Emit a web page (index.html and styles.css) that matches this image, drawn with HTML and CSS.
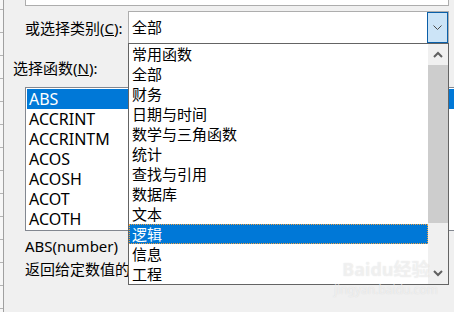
FILE: index.html
```html
<!DOCTYPE html>
<html lang="zh-CN">
<head>
    <meta charset="UTF-8">
    <meta name="viewport" content="width=device-width, initial-scale=1.0">
    <title>插入函数</title>
    <link rel="stylesheet" href="styles.css">
</head>
<body>
    <div class="window">
        <div class="ruler"></div>
        <div class="dialog">
            <div class="top-box"></div>
            <div class="category-row">
                <label class="category-label">或选择类别(<u>C</u>):</label>
                <div class="combo">
                    <span class="combo-value">全部</span>
                    <span class="combo-btn">
                        <svg width="9" height="5" viewBox="0 0 9 5"><polyline points="0.5,0.5 4.5,4.5 8.5,0.5" fill="none" stroke="#4a4a4a" stroke-width="1"/></svg>
                    </span>
                </div>
            </div>
            <div class="func-label">选择函数(<u>N</u>):</div>
            <div class="func-list">
                <div class="func-item selected">ABS</div>
                <div class="func-item">ACCRINT</div>
                <div class="func-item">ACCRINTM</div>
                <div class="func-item">ACOS</div>
                <div class="func-item">ACOSH</div>
                <div class="func-item">ACOT</div>
                <div class="func-item">ACOTH</div>
            </div>
            <div class="syntax">ABS(number)</div>
            <div class="desc">返回给定数值的</div>
        </div>

        <!-- 展开的类别下拉列表 -->
        <div class="dropdown">
            <div class="options">
                <div class="option">常用函数</div>
                <div class="option">全部</div>
                <div class="option">财务</div>
                <div class="option">日期与时间</div>
                <div class="option">数学与三角函数</div>
                <div class="option">统计</div>
                <div class="option">查找与引用</div>
                <div class="option">数据库</div>
                <div class="option">文本</div>
                <div class="option active">逻辑</div>
                <div class="option">信息</div>
                <div class="option">工程</div>
            </div>
            <div class="scrollbar">
                <div class="scroll-btn">
                    <svg width="10" height="7" viewBox="0 0 10 7"><polyline points="1,6 5,2 9,6" fill="none" stroke="#606060" stroke-width="2"/></svg>
                </div>
                <div class="scroll-thumb"></div>
                <div class="scroll-track"></div>
                <div class="scroll-btn">
                    <svg width="10" height="7" viewBox="0 0 10 7"><polyline points="1,1 5,5 9,1" fill="none" stroke="#606060" stroke-width="2"/></svg>
                </div>
            </div>
        </div>

        <div class="watermark">
            <div class="wm-logo">Baidu经验</div>
            <div class="wm-url">jingyan.baidu.com</div>
        </div>
    </div>
</body>
</html>
```
FILE: styles.css
```css
body {
    margin: 0;
    background-color: #f0f0f0;
    font-family: "Noto Sans", "Noto Sans CJK SC", sans-serif;
    font-size: 15px;
    color: #000;
    overflow: hidden;
}
.window {
    position: relative;
    display: flex;
    height: 312px;
    overflow: hidden;
}
.ruler {
    flex-shrink: 0;
    width: 3px;
    border-right: 1px solid #a0a0a0;
    background: repeating-linear-gradient(to bottom, #f7f7f7 0, #f7f7f7 9px, #b4b4b4 9px, #b4b4b4 10px, #f7f7f7 10px, #f7f7f7 23px);
}
.dialog {
    flex: 1;
    min-width: 0;
    padding-left: 21px;
}
.top-box {
    width: 422px;
    height: 5px;
    background-color: #fff;
    border: 1px solid #adadad;
    border-top: none;
}
.category-row {
    display: flex;
    align-items: center;
    margin-top: 5px;
}
.category-label {
    width: 103px;
    line-height: 20px;
}
.combo {
    display: flex;
    flex-shrink: 0;
    width: 321px;
    height: 33px;
    box-sizing: border-box;
    border: 1px solid #adadad;
    background-color: #fff;
}
.combo-value {
    flex: 1;
    padding-left: 3px;
    line-height: 31px;
}
.combo-btn {
    width: 21px;
    box-sizing: border-box;
    border: 1px solid #0a5fa8;
    background-color: #cce4f7;
    display: flex;
    align-items: center;
    justify-content: center;
}
.func-label {
    margin-top: 14px;
    margin-left: -12px;
    line-height: 20px;
}
.func-list {
    margin-top: 9px;
    width: 500px;
    padding: 1px;
    border: 1px solid #828790;
    background-color: #fff;
}
.func-item {
    height: 20px;
    line-height: 20px;
    padding-left: 2px;
    font-size: 16px;
}
.func-item.selected {
    background-color: #0078d7;
    color: #fff;
}
.syntax {
    margin-top: 5px;
    line-height: 20px;
}
.desc {
    margin-top: 3px;
    line-height: 20px;
    white-space: nowrap;
}
.dropdown {
    position: absolute;
    left: 128px;
    top: 43px;
    width: 321px;
    height: 242px;
    box-sizing: border-box;
    border: 1px solid #646464;
    background-color: #fff;
    display: flex;
}
.options {
    flex: 1;
}
.option {
    height: 20px;
    line-height: 20px;
    padding-left: 3px;
    white-space: nowrap;
    box-sizing: border-box;
}
.option.active {
    background-color: #0078d7;
    color: #fff;
    border: 1px dotted #f0a040;
    padding-left: 2px;
    line-height: 18px;
}
.scrollbar {
    width: 20px;
    background-color: #f0f0f0;
    display: flex;
    flex-direction: column;
}
.scroll-btn {
    height: 21px;
    display: flex;
    align-items: center;
    justify-content: center;
}
.scroll-thumb {
    height: 158px;
    background-color: #cdcdcd;
}
.scroll-track {
    flex: 1;
}
.watermark {
    position: absolute;
    left: 334px;
    top: 256px;
    white-space: nowrap;
    color: rgba(255, 255, 255, 0.55);
    text-shadow: 0 0 1px rgba(170, 170, 170, 0.4);
    text-align: center;
    pointer-events: none;
}
.wm-logo {
    font-size: 18px;
    font-weight: bold;
    line-height: 26px;
}
.wm-url {
    font-size: 12px;
    line-height: 16px;
}
```
